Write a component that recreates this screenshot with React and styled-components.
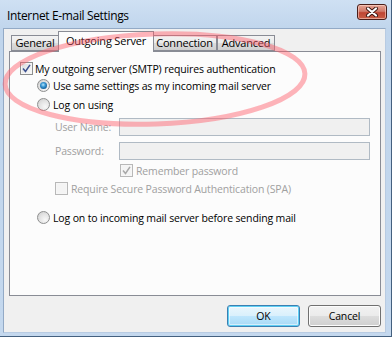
import React from 'react';
import styled, { createGlobalStyle } from 'styled-components';

const Global = createGlobalStyle`
  html, body { margin: 0; padding: 0; background: #c8dbef; }
  body { width: 392px; height: 337px; overflow: hidden; }
`;

const FONT = `"Open Sans", "Liberation Sans", sans-serif`;

const Window = styled.div`
  position: relative;
  width: 392px;
  height: 337px;
  box-sizing: border-box;
  display: flex;
  flex-direction: column;
  background: linear-gradient(180deg, #cfe0f3 0%, #c0d5ec 30px, #c4d8ee 100%);
  border-right: 1px solid #44607f;
  border-bottom: 1px solid #44607f;
  padding: 0 5px 3px 3px;
  font-family: ${FONT};
  font-size: 10.5px;
  letter-spacing: -0.15px;
  color: #000;
`;

const TitleBar = styled.div`
  height: 29px;
  display: flex;
  align-items: flex-start;
  justify-content: space-between;
  padding-left: 4px;
`;

const Title = styled.div`
  margin-top: 7px;
  font-size: 12px;
  letter-spacing: -0.35px;
  color: #000;
`;

const CloseBtn = styled.div`
  margin-top: 4px;
  margin-right: -1px;
  width: 30px;
  height: 16px;
  box-sizing: border-box;
  border: 1px solid #4a1e1a;
  border-radius: 3px;
  background: linear-gradient(180deg, #e7a596 0%, #d07a6a 45%, #bf4533 55%, #c95e46 100%);
  box-shadow: inset 0 0 0 1px rgba(255, 220, 210, 0.55);
  display: flex;
  align-items: center;
  justify-content: center;
`;

const Client = styled.div`
  flex: 1;
  background: #f0f0f0;
  border: 1px solid #93aac6;
  border-right-color: #b8cbe2;
  border-bottom-color: #b8cbe2;
  padding: 2px 4px 5px 5px;
  display: flex;
  flex-direction: column;
`;

const TabRow = styled.div`
  height: 20px;
  display: flex;
  align-items: flex-end;
  padding-left: 2px;
  position: relative;
  z-index: 1;
`;

const Tab = styled.div`
  box-sizing: border-box;
  width: ${p => p.$w}px;
  height: ${p => (p.$active ? 21 : 16)}px;
  margin-left: ${p => p.$ml || 0}px;
  margin-bottom: ${p => (p.$active ? -1 : 0)}px;
  border: 1px solid #898c95;
  border-bottom: ${p => (p.$active ? 'none' : '1px solid #898c95')};
  background: ${p =>
    p.$active ? '#fcfcfc' : 'linear-gradient(180deg, #f3f3f3 0%, #ebebeb 50%, #dddddd 51%, #cfcfcf 100%)'};
  display: flex;
  justify-content: center;
  padding-top: ${p => (p.$active ? 2 : 0)}px;
  font-size: 11px;
  letter-spacing: -0.2px;
  line-height: 14px;
  white-space: nowrap;
  position: relative;
  z-index: ${p => (p.$active ? 2 : 1)};
`;

const Panel = styled.div`
  height: 245px;
  box-sizing: border-box;
  border: 1px solid #898c95;
  background: #fcfcfc;
  padding: 8px 10px 0 10px;
  display: flex;
  flex-direction: column;
`;

const Row = styled.div`
  height: ${p => p.$h}px;
  display: flex;
  align-items: center;
  padding-left: ${p => p.$indent || 0}px;
  color: ${p => (p.$disabled ? '#a0a0a0' : '#000')};
`;

const Label = styled.span`
  margin-left: ${p => p.$gap || 3}px;
  white-space: nowrap;
`;

const FieldLabel = styled.span`
  width: 65px;
  color: #a0a0a0;
`;

const TextBox = styled.div`
  width: 253px;
  height: 18px;
  box-sizing: border-box;
  border: 1px solid #b0bac4;
  background: #f0f0f0;
`;

const Box = styled.div`
  width: 13px;
  height: 13px;
  box-sizing: border-box;
  flex: none;
  border: 1px solid ${p => (p.$disabled ? '#b8b8b8' : '#8e8f8f')};
  background: ${p =>
    p.$disabled ? '#f4f4f4' : 'linear-gradient(135deg, #d6d8da 0%, #eeeeee 55%, #fbfbfb 100%)'};
  box-shadow: inset 0 0 0 1px #f6f6f6;
  display: flex;
  align-items: center;
  justify-content: center;
`;

const Radio = styled.div`
  width: 13px;
  height: 13px;
  box-sizing: border-box;
  flex: none;
  border-radius: 50%;
  border: 1px solid #8e8f8f;
  background: radial-gradient(circle at 65% 70%, #f8f8f8 0%, #e2e2e2 55%, #c9c9c9 100%);
  display: flex;
  align-items: center;
  justify-content: center;
`;

const Dot = styled.div`
  width: 7px;
  height: 7px;
  border-radius: 50%;
  background: radial-gradient(circle at 45% 40%, #b8e6fb 0%, #3e9bd6 35%, #0f5c98 75%, #0b3f6e 100%);
`;

const ButtonRow = styled.div`
  display: flex;
  justify-content: flex-end;
  gap: 8px;
  margin-top: 9px;
`;

const Button = styled.div`
  width: 73px;
  height: 22px;
  box-sizing: border-box;
  border-radius: 3px;
  border: 1px solid ${p => (p.$default ? '#3c7fb1' : '#707070')};
  background: ${p =>
    p.$default
      ? 'linear-gradient(180deg, #eaf6fd 0%, #d9f0fc 50%, #bee6fd 51%, #a7d9f5 100%)'
      : 'linear-gradient(180deg, #f2f2f2 0%, #ebebeb 50%, #dddddd 51%, #cfcfcf 100%)'};
  box-shadow: ${p =>
    p.$default ? 'inset 0 0 0 1px #5fd0f5, inset 0 0 0 2px #ffffff80' : 'inset 0 0 0 1px #fcfcfc'};
  display: flex;
  align-items: center;
  justify-content: center;
`;

const Overlay = styled.svg`
  position: absolute;
  left: 0;
  top: 0;
  pointer-events: none;
  z-index: 5;
`;

function Check({ disabled }) {
  return (
    <svg width="9" height="9" viewBox="0 0 9 9">
      <path
        d="M1 4.5 L3.5 7.5 L8 0.8"
        fill="none"
        stroke={disabled ? '#a8a8a8' : '#3d5190'}
        strokeWidth="1.5"
      />
    </svg>
  );
}

function CheckBox({ checked, disabled }) {
  return <Box $disabled={disabled}>{checked && <Check disabled={disabled} />}</Box>;
}

function RadioButton({ checked }) {
  return <Radio>{checked && <Dot />}</Radio>;
}

export default function App() {
  return (
    <>
      <Global />
      <Window>
        <TitleBar>
          <Title>Internet E-mail Settings</Title>
          <CloseBtn>
            <svg width="14" height="10" viewBox="0 0 14 10">
              <path d="M3 1.5 L11 8.5 M11 1.5 L3 8.5" stroke="#3a1410" strokeWidth="4" strokeLinecap="round" />
              <path d="M3 1.5 L11 8.5 M11 1.5 L3 8.5" stroke="#ffffff" strokeWidth="2.2" strokeLinecap="round" />
            </svg>
          </CloseBtn>
        </TitleBar>
        <Client>
          <TabRow>
            <Tab $w={48}>General</Tab>
            <Tab $w={96} $ml={-1} $active>Outgoing Server</Tab>
            <Tab $w={65} $ml={-2}>Connection</Tab>
            <Tab $w={58} $ml={0}>Advanced</Tab>
          </TabRow>
          <Panel>
            <Row $h={17}>
              <CheckBox checked />
              <Label $gap={2}>My outgoing server (SMTP) requires authentication</Label>
            </Row>
            <Row $h={17} $indent={17}>
              <RadioButton checked />
              <Label>Use same settings as my incoming mail server</Label>
            </Row>
            <Row $h={21} $indent={17}>
              <RadioButton />
              <Label>Log on using</Label>
            </Row>
            <Row $h={24} $indent={35}>
              <FieldLabel>User Name:</FieldLabel>
              <TextBox />
            </Row>
            <Row $h={23} $indent={35}>
              <FieldLabel>Password:</FieldLabel>
              <TextBox />
            </Row>
            <Row $h={17} $indent={100} $disabled>
              <CheckBox checked disabled />
              <Label>Remember password</Label>
            </Row>
            <Row $h={19} $indent={35} $disabled>
              <CheckBox disabled />
              <Label>Require Secure Password Authentication (SPA)</Label>
            </Row>
            <Row $h={39} $indent={17}>
              <RadioButton />
              <Label>Log on to incoming mail server before sending mail</Label>
            </Row>
          </Panel>
          <ButtonRow>
            <Button $default>OK</Button>
            <Button>Cancel</Button>
          </ButtonRow>
        </Client>
        <Overlay width="392" height="337">
          <ellipse
            cx="155"
            cy="79"
            rx="150"
            ry="45"
            fill="none"
            stroke="#ff5a68"
            strokeOpacity="0.45"
            strokeWidth="5"
            transform="rotate(-2 155 79)"
          />
        </Overlay>
      </Window>
    </>
  );
}
